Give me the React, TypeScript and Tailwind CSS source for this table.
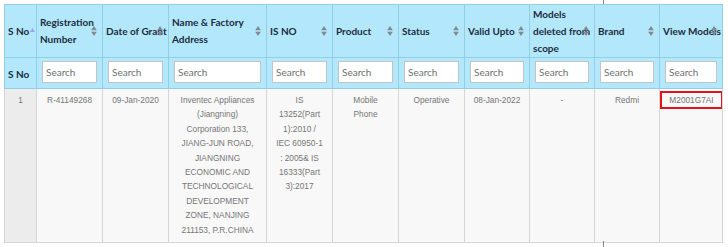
import React from "react";

const widths = [32, 66, 66, 98, 66, 66, 66, 65, 65, 65, 63];

const headers: { label: React.ReactNode; sort: "asc" | "both" }[] = [
  { label: "S No", sort: "asc" },
  { label: <>Registration<br />Number</>, sort: "both" },
  { label: "Date of Grant", sort: "both" },
  { label: <>Name &amp; Factory<br />Address</>, sort: "both" },
  { label: "IS NO", sort: "both" },
  { label: "Product", sort: "both" },
  { label: "Status", sort: "both" },
  { label: "Valid Upto", sort: "both" },
  { label: <>Models<br />deleted from<br />scope</>, sort: "both" },
  { label: "Brand", sort: "both" },
  { label: "View Models", sort: "both" },
];

const SortIcon = () => (
  <svg width="6" height="11" viewBox="0 0 6 11" className="absolute right-[5px] top-1/2 -translate-y-1/2">
    <path d="M3 0.5 L5.8 4.8 L0.2 4.8 Z" fill="#7f8a90" />
    <path d="M3 10.5 L5.8 6.2 L0.2 6.2 Z" fill="#7f8a90" />
  </svg>
);

const lines = (arr: string[]) =>
  arr.map((l, i) => (
    <React.Fragment key={i}>
      {l}
      {i < arr.length - 1 && <br />}
    </React.Fragment>
  ));

const dataCells: React.ReactNode[] = [
  "1",
  "R-41149268",
  "09-Jan-2020",
  lines([
    "Inventec Appliances",
    "(Jiangning)",
    "Corporation 133,",
    "JIANG-JUN ROAD,",
    "JIANGNING",
    "ECONOMIC AND",
    "TECHNOLOGICAL",
    "DEVELOPMENT",
    "ZONE, NANJING",
    "211153, P.R.CHINA",
  ]),
  lines(["IS", "13252(Part", "1):2010 /", "IEC 60950-1", ": 2005& IS", "16333(Part", "3):2017"]),
  lines(["Mobile", "Phone"]),
  "Operative",
  "08-Jan-2022",
  "-",
  "Redmi",
];

export default function App() {
  return (
    <div className="relative w-[728px] h-[247px] bg-white overflow-hidden">
      <div className="pt-[4px] pl-[4px]">
        <table className="table-fixed border-collapse w-[718px]">
          <colgroup>
            {widths.map((w, i) => (
              <col key={i} style={{ width: w }} />
            ))}
          </colgroup>
          <thead>
            <tr className="h-[53px] bg-[#b3e7fb]">
              {headers.map((h, i) => (
                <th
                  key={i}
                  className="relative border border-[#93cfe3] pl-[3px] pr-[2px] text-left align-middle font-bold text-[10px] leading-[17px] text-[#1a2c40] whitespace-nowrap"
                  style={{ fontFamily: "Lato, 'Noto Sans', sans-serif" }}
                >
                  {i === 0 ? (
                    <span className="inline-flex items-start">
                      S No
                      <svg width="5" height="4" viewBox="0 0 5 4" className="mt-[5px] ml-[1px]">
                        <path d="M2.5 0 L5 4 L0 4 Z" fill="#93a6e6" />
                      </svg>
                    </span>
                  ) : (
                    <>
                      {h.label}
                      <SortIcon />
                    </>
                  )}
                </th>
              ))}
            </tr>
            <tr className="h-[30px] bg-[#b3e7fb]">
              {widths.map((_, i) => (
                <td
                  key={i}
                  className="border border-[#93cfe3] px-[5px] pt-[2px] pb-[4px] align-middle"
                  style={{ fontFamily: "Lato, 'Noto Sans', sans-serif" }}
                >
                  {i === 0 ? (
                    <span className="-ml-[2px] font-bold text-[10px] text-[#1a2c40]">S No</span>
                  ) : (
                    <input
                      placeholder="Search"
                      className="block w-full h-[22px] bg-white border border-[#c4c4c4] px-[3px] text-[10px] text-[#555] placeholder:text-[#6f6f6f] outline-none"
                      style={{ fontFamily: "Lato, 'Noto Sans', sans-serif" }}
                    />
                  )}
                </td>
              ))}
            </tr>
          </thead>
          <tbody>
            <tr className="h-[154px]">
              {dataCells.map((c, i) => (
                <td
                  key={i}
                  className={`border border-[#d6d6d6] align-top text-center pt-[4px] px-[2px] text-[8.3px] leading-[14.4px] text-[#767676] ${
                    i === 0 ? "bg-[#ececec]" : "bg-[#f8f8f8]"
                  }`}
                  style={{ fontFamily: "'Liberation Sans', Arial, sans-serif" }}
                >
                  {c}
                </td>
              ))}
              <td
                className="border border-[#d6d6d6] align-top bg-[#f8f8f8] pt-[2px] px-0"
                style={{ fontFamily: "'Liberation Sans', Arial, sans-serif" }}
              >
                <div className="mx-auto w-[63px] h-[18px] border-2 border-[#e0151b] flex items-center justify-center text-[8.3px] text-[#767676] bg-[#f8f8f8]">
                  M2001G7AI
                </div>
              </td>
            </tr>
          </tbody>
        </table>
      </div>
      <div className="absolute left-[603px] top-0 w-px h-[4px] bg-[#888]" />
      <div className="absolute left-[603px] top-[241px] w-px h-[6px] bg-[#888]" />
    </div>
  );
}
